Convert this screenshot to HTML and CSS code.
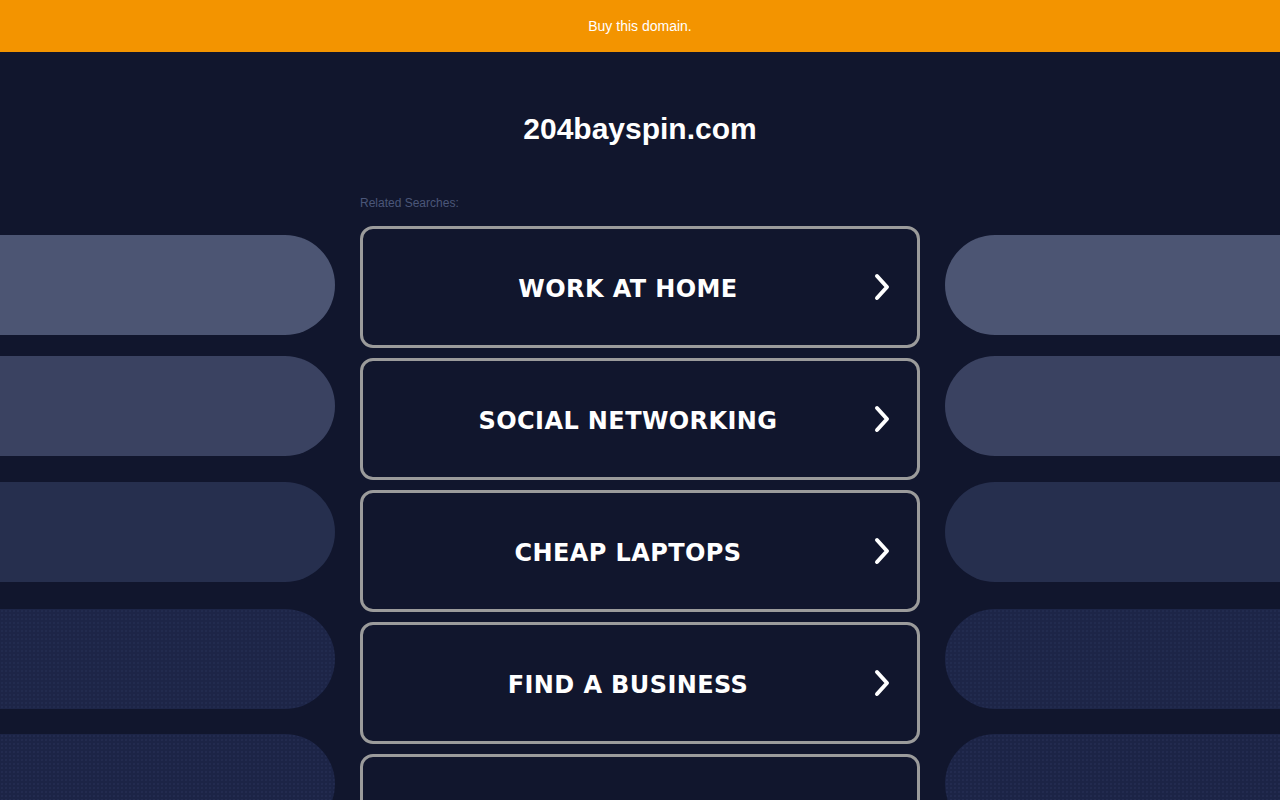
FILE: index.html
```html
<!DOCTYPE html>
<html lang="en">
<head>
<meta charset="utf-8">
<title>204bayspin.com</title>
<link rel="stylesheet" href="styles.css">
</head>
<body>
<div class="topbar">Buy this domain.</div>
<div class="main">
  <div class="side side-left">
    <div class="pill p1"></div>
    <div class="pill p2"></div>
    <div class="pill p3"></div>
    <div class="pill p4"></div>
    <div class="pill p5"></div>
  </div>
  <div class="center">
    <h1 class="title">204bayspin.com</h1>
    <div class="related">Related Searches:</div>
    <div class="links">
      <a class="link" href="#"><span class="label">WORK AT HOME</span><svg class="chev" viewBox="0 0 16 28" width="16" height="28"><polyline points="3,3 13,14 3,25" fill="none" stroke="#fff" stroke-width="4" stroke-linecap="round" stroke-linejoin="round"/></svg></a>
      <a class="link" href="#"><span class="label">SOCIAL NETWORKING</span><svg class="chev" viewBox="0 0 16 28" width="16" height="28"><polyline points="3,3 13,14 3,25" fill="none" stroke="#fff" stroke-width="4" stroke-linecap="round" stroke-linejoin="round"/></svg></a>
      <a class="link" href="#"><span class="label">CHEAP LAPTOPS</span><svg class="chev" viewBox="0 0 16 28" width="16" height="28"><polyline points="3,3 13,14 3,25" fill="none" stroke="#fff" stroke-width="4" stroke-linecap="round" stroke-linejoin="round"/></svg></a>
      <a class="link" href="#"><span class="label">FIND A BUSINESS</span><svg class="chev" viewBox="0 0 16 28" width="16" height="28"><polyline points="3,3 13,14 3,25" fill="none" stroke="#fff" stroke-width="4" stroke-linecap="round" stroke-linejoin="round"/></svg></a>
      <a class="link" href="#"><span class="label">ONLINE DEGREES</span><svg class="chev" viewBox="0 0 16 28" width="16" height="28"><polyline points="3,3 13,14 3,25" fill="none" stroke="#fff" stroke-width="4" stroke-linecap="round" stroke-linejoin="round"/></svg></a>
    </div>
  </div>
  <div class="side side-right">
    <div class="pill p1"></div>
    <div class="pill p2"></div>
    <div class="pill p3"></div>
    <div class="pill p4"></div>
    <div class="pill p5"></div>
  </div>
</div>
</body>
</html>
```
FILE: styles.css
```css
html, body {
  margin: 0;
  padding: 0;
  height: 800px;
  overflow: hidden;
  background: #11162d;
  font-family: "Liberation Sans", Arial, sans-serif;
}

.topbar {
  height: 52px;
  background: #f39400;
  color: #ffffff;
  font-size: 14px;
  line-height: 52px;
  text-align: center;
}

.main {
  display: flex;
  column-gap: 25px;
  height: 748px;
  overflow: hidden;
}

.side {
  width: 335px;
  flex: none;
  display: flex;
  flex-direction: column;
  padding-top: 183px;
}

.pill {
  height: 100px;
  flex: none;
}

.side-left .pill { border-radius: 0 50px 50px 0; }
.side-right .pill { border-radius: 50px 0 0 50px; }

.p1 { background: #4c5573; }
.p2 { background: #3a4261; margin-top: 21px; }
.p3 { background: #262f4e; margin-top: 26px; }
.p4 {
  background-color: #1d2547;
  background-image: radial-gradient(rgba(120, 140, 200, 0.06) 0.7px, transparent 1px);
  background-size: 4px 4px;
  margin-top: 27px;
}
.p5 {
  background-color: #1c2446;
  background-image: radial-gradient(rgba(120, 140, 200, 0.07) 0.7px, transparent 1px);
  background-size: 4px 4px;
  margin-top: 25px;
}

.center {
  width: 560px;
  flex: none;
  display: flex;
  flex-direction: column;
}

.title {
  margin: 59px 0 0 0;
  font-size: 30px;
  line-height: 36px;
  font-weight: bold;
  color: #ffffff;
  text-align: center;
}

.related {
  margin-top: 49px;
  font-size: 12px;
  line-height: 14px;
  color: #4b5679;
}

.links {
  margin-top: 16px;
  display: flex;
  flex-direction: column;
  row-gap: 10px;
}

.link {
  box-sizing: border-box;
  height: 122px;
  flex: none;
  border: 3px solid #9b9b9b;
  border-radius: 13px;
  display: flex;
  align-items: center;
  padding: 0 27px 0 19px;
  text-decoration: none;
  color: #ffffff;
}

.label {
  flex: 1;
  text-align: center;
  font-family: "DejaVu Sans", Verdana, sans-serif;
  font-weight: bold;
  font-size: 24px;
  letter-spacing: 0.4px;
  padding-top: 4px;
}

.chev {
  flex: none;
  display: block;
}
```
